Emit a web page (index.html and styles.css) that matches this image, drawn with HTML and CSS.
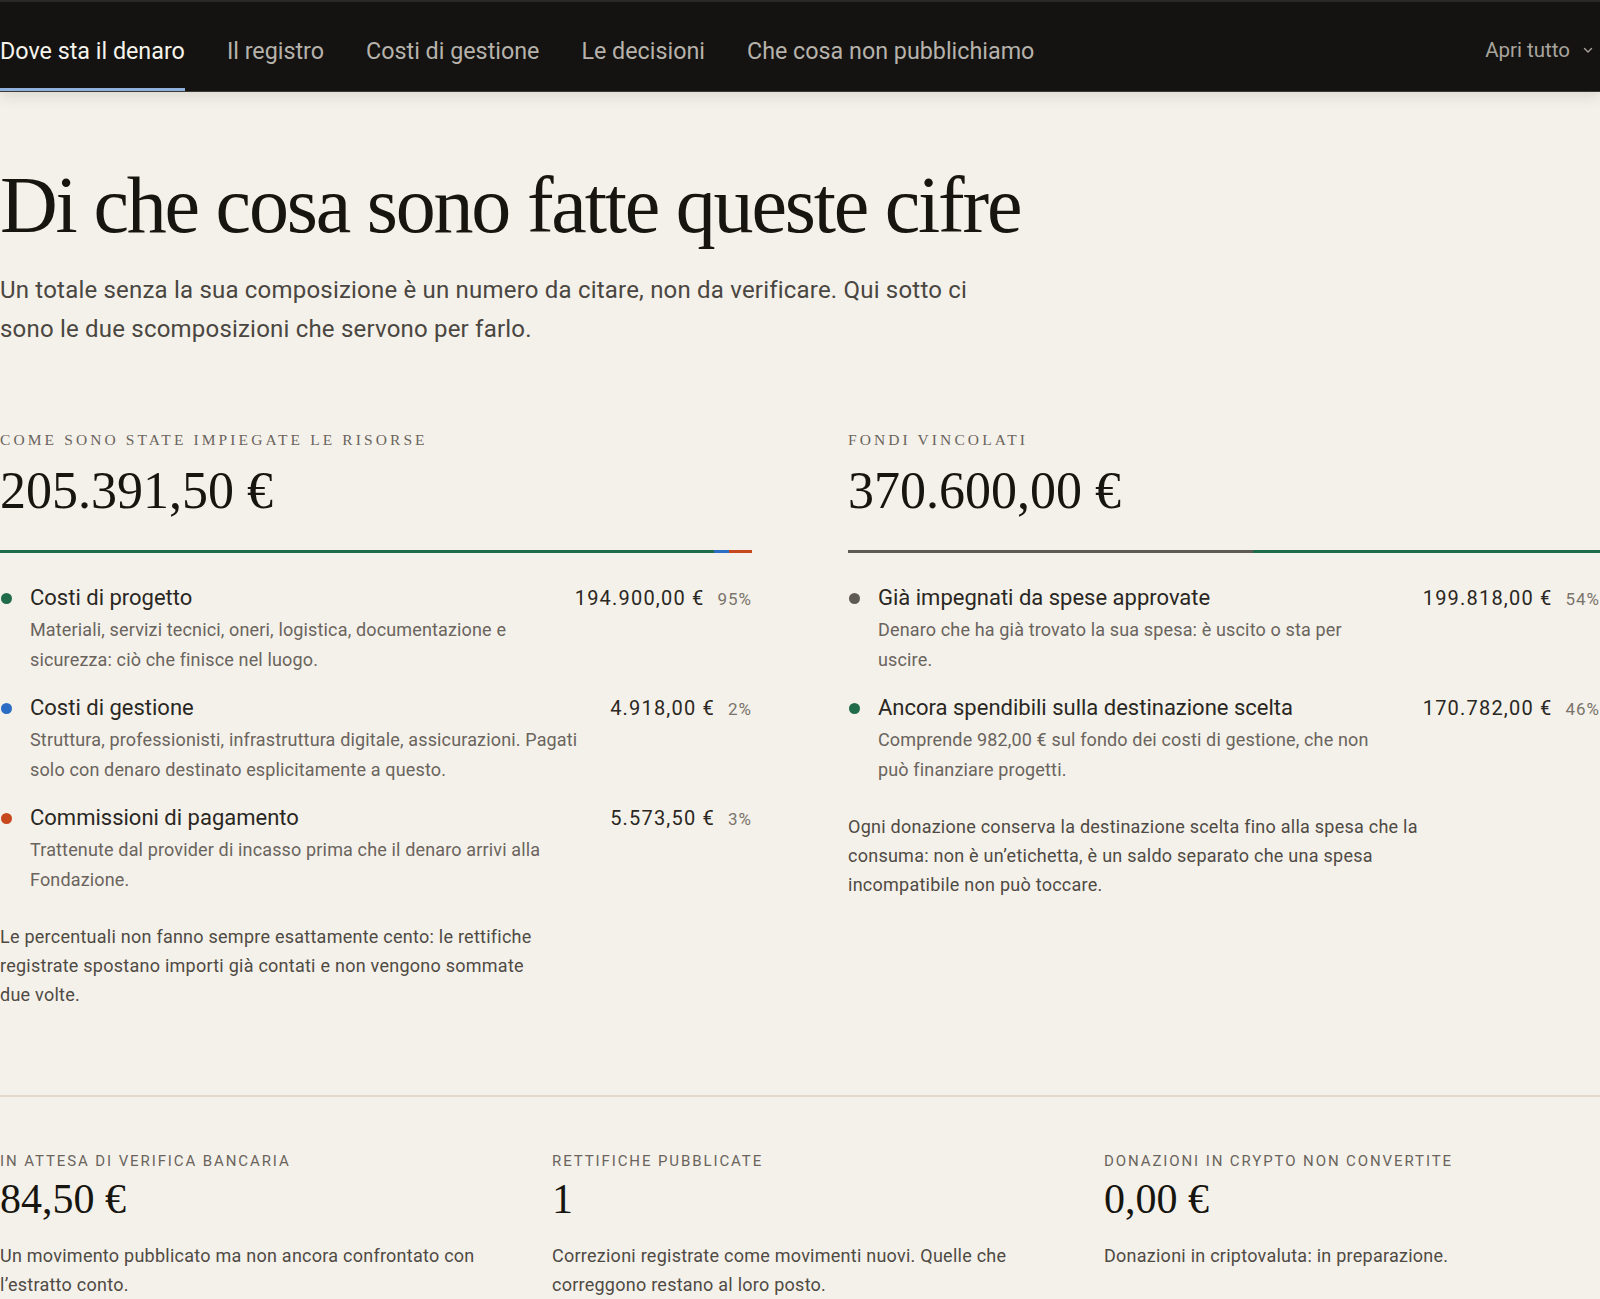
FILE: index.html
```html
<!DOCTYPE html>
<html lang="it">
<head>
<meta charset="utf-8">
<title>Dove sta il denaro</title>
<link rel="stylesheet" href="styles.css">
</head>
<body>
<header class="topbar">
  <nav class="tabs">
    <a class="tab active" href="#">Dove sta il denaro</a>
    <a class="tab" href="#">Il registro</a>
    <a class="tab" href="#">Costi di gestione</a>
    <a class="tab" href="#">Le decisioni</a>
    <a class="tab" href="#">Che cosa non pubblichiamo</a>
  </nav>
  <button class="open-all">Apri tutto
    <svg class="chev" width="12" height="12" viewBox="0 0 12 12"><path d="M2.5 4.5 L6 8 L9.5 4.5" fill="none" stroke="currentColor" stroke-width="1.4" stroke-linecap="round" stroke-linejoin="round"/></svg>
  </button>
</header>

<main class="page">
  <section class="intro">
    <h1 class="title">Di che cosa sono fatte queste cifre</h1>
    <p class="lead">Un totale senza la sua composizione è un numero da citare, non da verificare. Qui sotto ci sono le due scomposizioni che servono per farlo.</p>
  </section>

  <section class="breakdowns">
    <div class="block">
      <div class="block-label">Come sono state impiegate le risorse</div>
      <div class="block-total">205.391,50 €</div>
      <div class="bar">
        <span class="seg green" style="width:94.9%"></span>
        <span class="seg blue" style="width:2.0%"></span>
        <span class="seg orange" style="width:3.1%"></span>
      </div>
      <ul class="rows">
        <li class="row">
          <span class="dot green"></span>
          <div class="row-text">
            <div class="row-title">Costi di progetto</div>
            <p class="row-desc">Materiali, servizi tecnici, oneri, logistica, documentazione e sicurezza: ciò che finisce nel luogo.</p>
          </div>
          <div class="figures"><span class="amount">194.900,00 €</span><span class="pct">95%</span></div>
        </li>
        <li class="row">
          <span class="dot blue"></span>
          <div class="row-text">
            <div class="row-title">Costi di gestione</div>
            <p class="row-desc">Struttura, professionisti, infrastruttura digitale, assicurazioni. Pagati solo con denaro destinato esplicitamente a questo.</p>
          </div>
          <div class="figures"><span class="amount">4.918,00 €</span><span class="pct">2%</span></div>
        </li>
        <li class="row">
          <span class="dot orange"></span>
          <div class="row-text">
            <div class="row-title">Commissioni di pagamento</div>
            <p class="row-desc">Trattenute dal provider di incasso prima che il denaro arrivi alla Fondazione.</p>
          </div>
          <div class="figures"><span class="amount">5.573,50 €</span><span class="pct">3%</span></div>
        </li>
      </ul>
      <p class="note">Le percentuali non fanno sempre esattamente cento: le rettifiche registrate spostano importi già contati e non vengono sommate due volte.</p>
    </div>

    <div class="block block-funds">
      <div class="block-label">Fondi vincolati</div>
      <div class="block-total">370.600,00 €</div>
      <div class="bar">
        <span class="seg grey" style="width:53.9%"></span>
        <span class="seg green" style="width:46.1%"></span>
      </div>
      <ul class="rows">
        <li class="row">
          <span class="dot grey"></span>
          <div class="row-text">
            <div class="row-title">Già impegnati da spese approvate</div>
            <p class="row-desc">Denaro che ha già trovato la sua spesa: è uscito o sta per uscire.</p>
          </div>
          <div class="figures"><span class="amount">199.818,00 €</span><span class="pct">54%</span></div>
        </li>
        <li class="row">
          <span class="dot green"></span>
          <div class="row-text">
            <div class="row-title">Ancora spendibili sulla destinazione scelta</div>
            <p class="row-desc">Comprende 982,00 € sul fondo dei costi di gestione, che non può finanziare progetti.</p>
          </div>
          <div class="figures"><span class="amount">170.782,00 €</span><span class="pct">46%</span></div>
        </li>
      </ul>
      <p class="note note-wide">Ogni donazione conserva la destinazione scelta fino alla spesa che la consuma: non è un’etichetta, è un saldo separato che una spesa incompatibile non può toccare.</p>
    </div>
  </section>

  <section class="stats">
    <div class="stat">
      <div class="stat-label">In attesa di verifica bancaria</div>
      <div class="stat-value">84,50 €</div>
      <p class="stat-desc">Un movimento pubblicato ma non ancora confrontato con l’estratto conto.</p>
    </div>
    <div class="stat">
      <div class="stat-label">Rettifiche pubblicate</div>
      <div class="stat-value">1</div>
      <p class="stat-desc">Correzioni registrate come movimenti nuovi. Quelle che correggono restano al loro posto.</p>
    </div>
    <div class="stat">
      <div class="stat-label">Donazioni in crypto non convertite</div>
      <div class="stat-value">0,00 €</div>
      <p class="stat-desc">Donazioni in criptovaluta: in preparazione.</p>
    </div>
  </section>
</main>
</body>
</html>
```

FILE: styles.css
```css
* { box-sizing: border-box; }

html, body {
  margin: 0;
  padding: 0;
  background: #f4f1ea;
  color: #1c1a17;
  font-family: Roboto, "Liberation Sans", sans-serif;
}

.topbar {
  height: 92px;
  background: #141311;
  border-top: 2px solid #2a2926;
  border-bottom: 1px solid #3b3a37;
  display: flex;
  align-items: stretch;
  justify-content: space-between;
  box-shadow: 0 4px 14px rgba(40, 30, 20, 0.12);
  position: relative;
}

.tabs {
  display: flex;
  gap: 42px;
  align-items: stretch;
}

.tab {
  display: flex;
  align-items: center;
  padding-top: 12px;
  font-size: 23.3px;
  letter-spacing: 0;
  color: #b6b2ab;
  text-decoration: none;
  border-bottom: 3px solid transparent;
}

.tab.active {
  color: #f6f3ec;
  border-bottom-color: #8fb1db;
}

.open-all {
  display: flex;
  align-items: center;
  gap: 12px;
  background: none;
  border: 0;
  padding: 6px 6px 0 0;
  font-family: Roboto, "Liberation Sans", sans-serif;
  font-size: 20.5px;
  color: #a8a49d;
}

.chev { color: #a8a49d; }

.page {
  display: flex;
  flex-direction: column;
}

.intro {
  padding-top: 69px;
}

.title {
  margin: 0;
  font-family: "Liberation Serif", "Times New Roman", serif;
  font-weight: 400;
  font-size: 80px;
  line-height: 88px;
  letter-spacing: -2.2px;
  color: #17150f;
}

.lead {
  margin: 22px 0 0;
  max-width: 990px;
  font-size: 24px;
  line-height: 39px;
  color: #4a4641;
  letter-spacing: 0.2px;
}

.breakdowns {
  display: grid;
  grid-template-columns: 1fr 1fr;
  column-gap: 96px;
  padding-top: 81px;
  padding-bottom: 86px;
}

.block-label {
  font-family: "Liberation Serif", "Times New Roman", serif;
  text-transform: uppercase;
  font-size: 15.5px;
  line-height: 20px;
  letter-spacing: 3.1px;
  color: #6a645d;
}

.block-total {
  margin-top: 11px;
  font-family: "Liberation Serif", "Times New Roman", serif;
  font-size: 52px;
  line-height: 60px;
  color: #17150f;
}

.bar {
  margin-top: 29px;
  height: 3px;
  display: flex;
}

.seg { display: block; height: 100%; }
.seg.green { background: #1f6b4a; }
.seg.blue { background: #2b6cc4; }
.seg.orange { background: #c8481d; }
.seg.grey { background: #5f5a55; }

.rows {
  list-style: none;
  margin: 30px 0 0;
  padding: 0;
  display: flex;
  flex-direction: column;
  gap: 19px;
}

.row {
  display: grid;
  grid-template-columns: 30px 1fr auto;
  column-gap: 0;
  align-items: start;
}

.dot {
  width: 11px;
  height: 11px;
  border-radius: 50%;
  margin-top: 10px;
  margin-left: 1px;
}
.dot.green { background: #1f6b4a; }
.dot.blue { background: #2b6cc4; }
.dot.orange { background: #c8481d; }
.dot.grey { background: #5f5a55; }

.row-text { padding-right: 16px; }

.row-title {
  font-size: 22px;
  line-height: 30px;
  color: #2a2723;
  letter-spacing: 0;
}

.row-desc {
  margin: 2px 0 0;
  font-size: 18px;
  line-height: 29.5px;
  color: #6a645d;
  letter-spacing: 0.15px;
}

.block-funds .row-desc { max-width: 505px; }

.figures {
  display: flex;
  align-items: baseline;
  gap: 13px;
  line-height: 30px;
}

.amount {
  font-size: 20px;
  color: #2a2723;
  letter-spacing: 1.2px;
  white-space: nowrap;
}

.pct {
  font-size: 17px;
  color: #7a746c;
  letter-spacing: 1px;
}

.note {
  margin: 28px 0 0;
  max-width: 545px;
  font-size: 18px;
  line-height: 29px;
  color: #4f4a44;
  letter-spacing: 0.25px;
}

.note-wide { max-width: 580px; }

.stats {
  border-top: 2px solid #e3d9ca;
  display: grid;
  grid-template-columns: repeat(3, 1fr);
  column-gap: 56px;
  padding-top: 54px;
}

.stat-label {
  text-transform: uppercase;
  font-size: 15px;
  line-height: 20px;
  letter-spacing: 1.9px;
  color: #6a645d;
}

.stat-value {
  margin-top: 3px;
  font-family: "Liberation Serif", "Times New Roman", serif;
  font-size: 42px;
  line-height: 50px;
  color: #17150f;
}

.stat-desc {
  margin: 17px 0 0;
  max-width: 480px;
  font-size: 18px;
  line-height: 29px;
  color: #4f4a44;
  letter-spacing: 0.25px;
}
```
